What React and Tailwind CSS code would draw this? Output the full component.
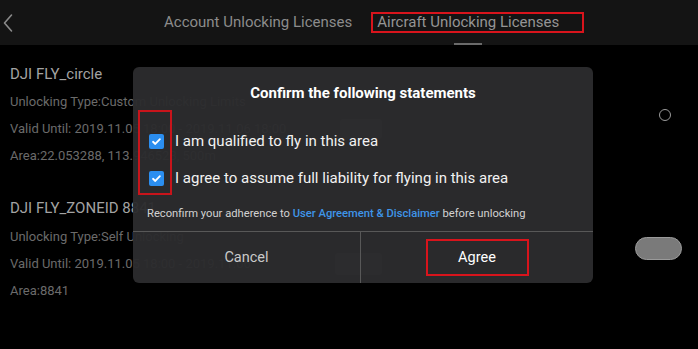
import React from 'react';

const Check = () => (
  <span className="w-[15px] h-[15px] rounded-[2px] bg-[#2b8ef0] flex items-center justify-center shrink-0">
    <svg width="11" height="11" viewBox="0 0 12 12" fill="none">
      <path d="M2.2 6.3l2.5 2.4 5-5.2" stroke="#fff" strokeWidth="2" strokeLinecap="round" strokeLinejoin="round" />
    </svg>
  </span>
);

const Line = ({ children }) => (
  <div className="h-[27px] flex items-center text-[13px] text-[#6b6b6b] whitespace-nowrap">{children}</div>
);

const App = () => {
  return (
    <div className="w-[698px] h-[349px] bg-black relative overflow-hidden" style={{ fontFamily: 'Roboto, "Liberation Sans", sans-serif' }}>
      {/* header */}
      <div className="h-[45px] bg-[#141414] flex items-center">
        <svg className="ml-[3px]" width="10" height="20" viewBox="0 0 10 20" fill="none">
          <path d="M8.5 2L1.5 10l7 8" stroke="#8a8a8a" strokeWidth="1.6" strokeLinecap="round" strokeLinejoin="round" />
        </svg>
        <div className="ml-[151px] text-[15px] text-[#8c8c8c] whitespace-nowrap">Account Unlocking Licenses</div>
        <div className="ml-[19px] relative h-full flex items-center">
          <div className="w-[213px] h-[21px] border-2 border-[#d8141c] pl-[4px] flex items-center text-[15px] text-[#959595] whitespace-nowrap">
            Aircraft Unlocking Licenses
          </div>
          <span className="absolute bottom-0 left-[83px] w-[28px] h-[2px] bg-[#6a6a6a]" />
        </div>
      </div>

      {/* list */}
      <div className="pl-[10px]">
        <div className="mt-[15px] flex items-center justify-between">
          <div>
            <div className="h-[28px] flex items-center text-[15px] text-[#a3a3a3]">DJI FLY_circle</div>
            <Line>Unlocking Type:Custom Unlocking Limits</Line>
            <Line>
              <span className="w-[330px]">Valid Until: 2019.11.05 18:00 - 2019.11.06 18:00</span>
              <span className="w-[42px] h-[20px] rounded-[3px] bg-[#3a3a3a]" />
            </Line>
            <Line>Area:22.053288, 113.946523, 500m</Line>
          </div>
          <span className="mr-[27px] w-[12px] h-[12px] rounded-full border-[1.5px] border-[#9a9a9a]" />
        </div>

        <div className="mt-[24px] flex items-center justify-between">
          <div>
            <div className="h-[30px] flex items-center text-[15px] text-[#a3a3a3]">DJI FLY_ZONEID 8841</div>
            <Line>Unlocking Type:Self Unlocking</Line>
            <Line>
              <span className="w-[325px]">Valid Until: 2019.11.05 18:00 - 2019.11.06</span>
              <span className="w-[47px] h-[22px] rounded-[3px] bg-[#3a3a3a]" />
            </Line>
            <Line>Area:8841</Line>
          </div>
          <span className="mr-[16px] w-[47px] h-[23px] rounded-full bg-[#7a7a7a] border border-[#9a9a9a]" />
        </div>
      </div>

      {/* dialog */}
      <div className="absolute left-[133px] top-[67px] w-[460px] h-[216px] rounded-[6px] bg-[#2c2c2e]/[0.96] flex flex-col">
        <div className="pt-[17px] h-[56px] text-center text-[15px] leading-[18px] font-bold text-white">Confirm the following statements</div>
        <div className="pl-[16px] flex flex-col">
          <div className="h-[37px] flex items-center gap-[11px]">
            <Check />
            <span className="text-[15px] text-[#f2f2f2]">I am qualified to fly in this area</span>
          </div>
          <div className="h-[37px] flex items-center gap-[11px]">
            <Check />
            <span className="text-[15px] text-[#f2f2f2]">I agree to assume full liability for flying in this area</span>
          </div>
        </div>
        <div className="pl-[14px] h-[34px] flex items-center text-[11.2px] text-[#d2d2d2] whitespace-nowrap">
          Reconfirm your adherence to&nbsp;<span className="text-[#3f95e8] font-medium">User Agreement &amp; Disclaimer</span>&nbsp;before unlocking
        </div>
        <div className="flex-1 border-t border-[#585858] grid grid-cols-[228px_1fr]">
          <div className="border-r border-[#585858] flex items-center justify-center text-[14.5px] text-[#c9c9c9]">Cancel</div>
          <div className="flex items-center justify-center">
            <div className="w-[103px] h-[37px] border-2 border-[#d8141c] flex items-center justify-center text-[14.5px] text-white">Agree</div>
          </div>
        </div>
        <span className="absolute left-[5px] top-[43px] w-[34px] h-[85px] border-2 border-[#c8141b]" />
      </div>
    </div>
  );
};

export default App;
